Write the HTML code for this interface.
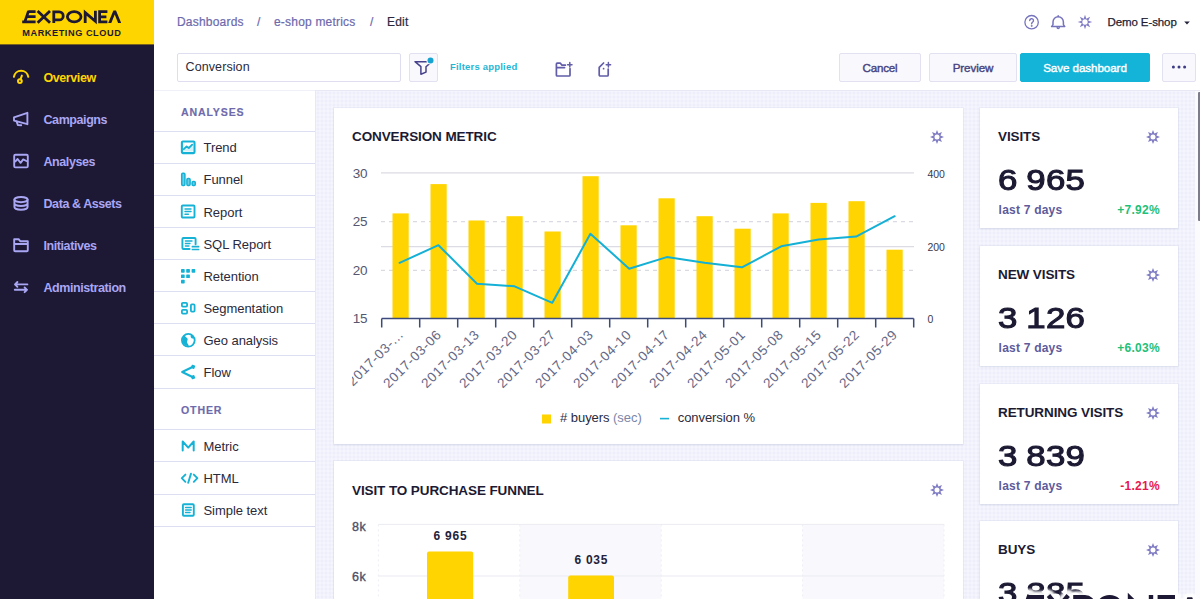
<!DOCTYPE html>
<html>
<head>
<meta charset="utf-8">
<title>Exponea – Edit dashboard</title>
<style>
*{box-sizing:border-box;margin:0;padding:0}
html,body{width:1200px;height:599px;overflow:hidden;background:#fff}
body{font-family:"Liberation Sans",sans-serif;color:#1c1a33;position:relative;-webkit-font-smoothing:antialiased}
.abs{position:absolute}
/* sidebar */
#side{position:absolute;left:0;top:0;width:154px;height:599px;background:#1d1834}
#logo{position:absolute;left:0;top:0;width:154px;height:44px;background:#ffd500;box-shadow:0 0.4px 0 #ffd500}
.nav{position:absolute;left:43.5px;font-size:12.5px;font-weight:700;color:#a9a6f3;letter-spacing:-0.42px;line-height:14px;white-space:nowrap;margin-top:0.5px}
.nav.on{color:#ffd600}
.nico{position:absolute;left:12px;width:18px;height:18px}
/* top */
.bc{position:absolute;top:15px;font-size:12px;line-height:14px;color:#6d69ad;white-space:nowrap;letter-spacing:0.2px;-webkit-text-stroke:0.2px}
/* toolbar */
.btn{position:absolute;top:53px;height:29px;border:1px solid #e1e1f2;background:#f8f8fd;border-radius:2px;font-size:11.6px;font-weight:400;color:#47437f;text-align:center;line-height:27px;letter-spacing:0px;-webkit-text-stroke:0.4px}
/* left panel */
#panel{position:absolute;left:154px;top:90px;width:161px;height:509px;background:#fff;border-top:1px solid #f0f0f9}
.ph{position:absolute;left:27px;font-size:10.6px;font-weight:700;color:#6e6aab;letter-spacing:0.85px;line-height:12px;-webkit-text-stroke:0.15px #6e6aab}
.sep{position:absolute;left:0;width:161px;height:1px;background:#dedef2}
.it{position:absolute;left:49.5px;font-size:13px;color:#2a2a3c;line-height:16px;white-space:nowrap;letter-spacing:-0.05px;margin-top:1px}
.ico{position:absolute;left:26px;width:16px;height:16px}
/* main */
#main{position:absolute;left:315px;top:90px;width:885px;height:509px;background:#f5f6fd;overflow:hidden;border-left:1px solid #e7e8f4;border-top:1px solid #e7e8f4}
.card{position:absolute;background:#fff;box-shadow:0 0 0 1px rgba(205,208,232,.22),0 1px 2px rgba(120,125,170,.16)}
.ct{position:absolute;font-size:13.5px;font-weight:700;color:#1c1a33;white-space:nowrap;line-height:16px;letter-spacing:-0.1px}
.big{position:absolute;left:18px;font-size:29px;font-weight:400;color:#1c1a33;line-height:32px;white-space:nowrap;transform:scaleX(1.2);transform-origin:0 0;-webkit-text-stroke:1.05px #1c1a33;word-spacing:-1px;letter-spacing:0.2px}
.sub{position:absolute;left:18px;font-size:12px;font-weight:700;color:#5d5b9c;line-height:14px;white-space:nowrap;letter-spacing:0.22px}
.pct{position:absolute;right:17px;font-size:12px;font-weight:700;line-height:14px;white-space:nowrap;letter-spacing:0.3px}
.gear{position:absolute;width:16px;height:16px}
</style>
</head>
<body>

<!-- ============ SIDEBAR ============ -->
<div id="side">
  <div id="logo"></div>
  <svg class="abs" style="left:0;top:0" width="154" height="45" viewBox="0 0 154 45" fill="none" stroke="#1d1834" stroke-width="2.8" font-family="Liberation Sans, sans-serif">
    <path d="M22.2 21.9H35.6M26.4 16.7H35.6M28.4 11.6H35.6M24.8 21.9L28.6 10.9"/>
    <path d="M37.6 11L50 22.8M50 11L37.6 22.8"/>
    <path d="M53.8 23V11.9H59.2A4 4 0 0 1 59.2 19.9H54"/>
    <ellipse cx="74.2" cy="16.8" rx="6.8" ry="5.1"/>
    <path d="M85.2 23V12.6L95.4 21.2V10.7"/>
    <path d="M107.4 11.7H99.6V21.9H107.4M99.6 16.8H106.4"/>
    <path d="M108.2 23L113.4 10.5H116L121.2 23H118.1L114.7 14.4L111.3 23Z" fill="#1d1834" stroke="none"/>
    <text x="22.3" y="35.6" font-size="9.2" font-weight="700" fill="#1d1834" stroke="none" textLength="98.5" lengthAdjust="spacing">MARKETING CLOUD</text>
  </svg>
  <svg class="nico" style="top:68px" viewBox="0 0 18 18" fill="none" stroke="#ffd600" stroke-width="2" stroke-linecap="round" stroke-linejoin="round"><path d="M1.9 8.8A7.3 7.3 0 0 1 16.3 8.8"/><circle cx="7.9" cy="13.1" r="1.9"/><path d="M8.6 11.2L9.9 7.6"/></svg>
  <svg class="nico" style="top:110px" viewBox="0 0 18 18" fill="none" stroke="#a9a6f3" stroke-width="1.9" stroke-linecap="round" stroke-linejoin="round"><path d="M2 7.4L15.4 2.8V14.2L2 10.6Z"/><path d="M4.6 11.4L5.8 15L9.2 15.2" /></svg>
  <svg class="nico" style="top:152px" viewBox="0 0 18 18" fill="none" stroke="#a9a6f3" stroke-width="1.9" stroke-linecap="round" stroke-linejoin="round"><rect x="2.2" y="2.8" width="13.6" height="12.6" rx="1.2"/><path d="M3.4 9.4L5.6 7L8.6 10.8L11.2 7.4L14.4 9"/></svg>
  <svg class="nico" style="top:194px" viewBox="0 0 18 18" fill="none" stroke="#a9a6f3" stroke-width="1.9" stroke-linecap="round" stroke-linejoin="round"><ellipse cx="9" cy="5.6" rx="6.6" ry="2.6"/><path d="M2.4 5.6V13C2.4 14.5 5.3 15.7 9 15.7S15.6 14.5 15.6 13V5.6M2.4 9.3C2.4 10.8 5.3 12 9 12S15.6 10.8 15.6 9.3"/></svg>
  <svg class="nico" style="top:236px" viewBox="0 0 18 18" fill="none" stroke="#a9a6f3" stroke-width="1.9" stroke-linecap="round" stroke-linejoin="round"><path d="M2.2 14.2V3.2H6.6L8.2 5.2H15.8V14.2A1 1 0 0 1 14.8 15.2H3.2A1 1 0 0 1 2.2 14.2ZM2.2 8H15.8"/></svg>
  <svg class="nico" style="top:278px" viewBox="0 0 18 18" fill="none" stroke="#a9a6f3" stroke-width="1.9" stroke-linecap="round" stroke-linejoin="round"><path d="M3 6.4H15.4M5.4 4L3 6.4L5.4 8.8M15 11.8H2.8M12.6 9.4L15 11.8L12.6 14.2"/></svg>
  <div class="nav on" style="top:70px">Overview</div>
  <div class="nav" style="top:112px">Campaigns</div>
  <div class="nav" style="top:154px">Analyses</div>
  <div class="nav" style="top:196px">Data &amp; Assets</div>
  <div class="nav" style="top:238px">Initiatives</div>
  <div class="nav" style="top:280px">Administration</div>
</div>

<!-- ============ TOP BAR ============ -->
<div class="bc" style="left:177px">Dashboards</div>
<div class="bc" style="left:257px">/</div>
<div class="bc" style="left:274px">e-shop metrics</div>
<div class="bc" style="left:370px">/</div>
<div class="bc" style="left:387px;color:#2b2a3d">Edit</div>
<div class="bc" style="left:1107.5px;color:#1f1e33;font-size:11.5px;letter-spacing:-0.1px;-webkit-text-stroke:0.25px #1f1e33">Demo E-shop</div>

<!-- ============ TOOLBAR ============ -->
<div class="abs" style="left:177px;top:53px;width:224px;height:29px;border:1px solid #dedef0;border-radius:2px;background:#fff;font-size:12.5px;line-height:27px;padding-left:7.5px;color:#2b2a3d;letter-spacing:0.1px">Conversion</div>
<div class="btn" style="left:409px;width:29px"></div>
<div class="abs" style="left:450px;top:61px;font-size:9.5px;font-weight:700;color:#1fb6d6;line-height:12px;letter-spacing:0.2px;white-space:nowrap">Filters applied</div>
<div class="btn" style="left:839px;width:82px;letter-spacing:-0.2px">Cancel</div>
<div class="btn" style="left:929px;width:88px;letter-spacing:-0.1px">Preview</div>
<div class="btn" style="left:1020px;width:130px;background:#14b4d8;border-color:#14b4d8;color:#fff;letter-spacing:-0.06px">Save dashboard</div>
<div class="btn" style="left:1162px;width:34px"></div>


<!-- header icons -->
<svg class="abs" style="left:1023px;top:14px" width="17" height="17" viewBox="0 0 17 17" fill="none" stroke="#7673bd" stroke-width="1.3" stroke-linecap="round"><circle cx="8.6" cy="8.2" r="6.7"/><path d="M6.7 6.6A1.9 1.9 0 1 1 9.4 8.3C8.8 8.7 8.6 9 8.6 9.8" stroke-width="1.4"/><circle cx="8.6" cy="11.9" r="0.6" fill="#7673bd" stroke-width="0.6"/></svg>
<svg class="abs" style="left:1049px;top:14px" width="18" height="17" viewBox="0 0 18 17" fill="none" stroke="#7673bd" stroke-width="1.5" stroke-linejoin="round" stroke-linecap="round"><path d="M2.6 12.6H15.8L14.4 10.6V8A5.2 5.2 0 0 0 4 8V10.6Z"/><path d="M9.2 2.6V1.7M8.2 13.6A1 1 0 0 0 10.2 13.6" /></svg>
<svg class="abs" style="left:1076px;top:13px" width="18" height="18" viewBox="0 0 18 18"><path fill-rule="evenodd" fill="#807dc4" d="M9.00,1.70L10.34,5.77L14.16,3.84L12.23,7.66L16.30,9.00L12.23,10.34L14.16,14.16L10.34,12.23L9.00,16.30L7.66,12.23L3.84,14.16L5.77,10.34L1.70,9.00L5.77,7.66L3.84,3.84L7.66,5.77Z M11.7 9A2.7 2.7 0 1 0 6.3 9A2.7 2.7 0 1 0 11.7 9Z"/></svg>
<svg class="abs" style="left:1183px;top:20px" width="8" height="6" viewBox="0 0 8 6"><path d="M1.2 1.6H6.8L4 4.6Z" fill="#23223a"/></svg>

<!-- toolbar icons -->
<svg class="abs" style="left:409px;top:53px" width="30" height="29" viewBox="0 0 30 29" fill="none"><path d="M6 8.7H22.8L17 13.7V19.1L11.9 21.3V13.6Z" stroke="#46418c" stroke-width="1.5" stroke-linejoin="round"/><circle cx="21.5" cy="7.4" r="4.1" fill="#f8f8fd"/><circle cx="21.5" cy="7.4" r="3" fill="#17a3d2"/></svg>
<svg class="abs" style="left:554px;top:60px" width="20" height="18" viewBox="0 0 20 18" fill="none" stroke="#615da8" stroke-width="1.7" stroke-linejoin="round" stroke-linecap="round"><path d="M11.4 5.2H8L6.4 3.2H3.2A.8 .8 0 0 0 2.4 4V15.2A.8 .8 0 0 0 3.2 16H15.2A.8 .8 0 0 0 16 15.2V8.6M2.6 7.6H10.6"/><path d="M15.8 2.6V7M13.6 4.8H18" stroke-width="1.5"/></svg>
<svg class="abs" style="left:596px;top:60px" width="18" height="18" viewBox="0 0 18 18" fill="none" stroke="#615da8" stroke-width="1.7" stroke-linejoin="round" stroke-linecap="round"><path d="M7.6 3L3.2 7.4V15A1 1 0 0 0 4.2 16H11.2A1 1 0 0 0 12.2 15V9"/><circle cx="7.6" cy="8.7" r="0.9" fill="#615da8" stroke="none"/><path d="M12.4 2.6V7M10.2 4.8H14.6" stroke-width="1.5"/></svg>
<svg class="abs" style="left:1171px;top:64px" width="16" height="6" viewBox="0 0 16 6" fill="#3d3a86"><circle cx="2.4" cy="3" r="1.5"/><circle cx="8" cy="3" r="1.5"/><circle cx="13.6" cy="3" r="1.5"/></svg>

<!-- ============ LEFT PANEL ============ -->
<div id="panel">
  <div class="ph" style="top:15px">ANALYSES</div>
  <div class="ph" style="top:313px">OTHER</div>
  <div class="sep" style="top:40px"></div>
  <div class="sep" style="top:72px"></div>
  <div class="sep" style="top:104px"></div>
  <div class="sep" style="top:136px"></div>
  <div class="sep" style="top:168px"></div>
  <div class="sep" style="top:200px"></div>
  <div class="sep" style="top:232px"></div>
  <div class="sep" style="top:264px"></div>
  <div class="sep" style="top:297px"></div>
  <svg class="ico" style="top:48px;width:20px" viewBox="0 0 20 16" fill="none" stroke="#16b2d5" stroke-width="2.1" stroke-linecap="round" stroke-linejoin="round"><path d="M3 12.6V10.2L6.6 7.2L8.6 8.8L12.6 5.2L13.4 12.6Z" fill="#16b2d5" fill-opacity=".18" stroke="none"/><rect x="1.9" y="2.5" width="12.6" height="11.6" rx="1"/><path d="M3.8 10.2L6.6 7.4L8.8 9L12.2 5.6" stroke-width="1.8"/></svg>
  <div class="it" style="top:48px">Trend</div>
  <svg class="ico" style="top:80px;width:20px" viewBox="0 0 20 16" fill="none" stroke="#16b2d5" stroke-width="1.5" stroke-linecap="round" stroke-linejoin="round"><rect x="1.7" y="2.2" width="3.2" height="12.2" rx="1.1" fill="#6dcde5"/><rect x="6.9" y="7.6" width="3.2" height="6.8" rx="1.1" fill="#6dcde5"/><rect x="12.1" y="10.6" width="3.2" height="3.8" rx="1.1" fill="#6dcde5"/></svg>
  <div class="it" style="top:80px">Funnel</div>
  <svg class="ico" style="top:113px;width:20px" viewBox="0 0 20 16" fill="none" stroke="#16b2d5" stroke-width="1.9" stroke-linecap="round" stroke-linejoin="round"><rect x="1.8" y="1.5" width="12.7" height="12" rx="1"/><path d="M5 5H11M5 7.6H11M5 10.2H8.4" stroke-width="1.5"/></svg>
  <div class="it" style="top:113px">Report</div>
  <svg class="ico" style="top:145px;width:20px" viewBox="0 0 20 16" fill="none" stroke="#16b2d5" stroke-width="1.9" stroke-linecap="round" stroke-linejoin="round"><path d="M9.6 13H3.4a1 1 0 0 1-1-1V3a1 1 0 0 1 1-1h11.2a1 1 0 0 1 1 1V8.2"/><path d="M5.4 5H12M5.4 7.5H10M5.4 10H9" stroke-width="1.4"/><path d="M12.4 10.7H18.6M12.4 13.5H18.6" stroke-width="1.7"/></svg>
  <div class="it" style="top:145px">SQL Report</div>
  <svg class="ico" style="top:177px;width:20px" viewBox="0 0 20 16" fill="#16b2d5"><rect x="1" y="1" width="3.7" height="3.7" rx="0.7"/><rect x="6.2" y="1" width="3.7" height="3.7" rx="0.7"/><rect x="11.6" y="1" width="3.7" height="3.7" rx="0.7"/><rect x="1" y="6.4" width="3.7" height="3.7" rx="0.7"/><rect x="6.2" y="6.4" width="3.7" height="3.7" rx="0.7"/><rect x="1" y="11.8" width="3.7" height="3.7" rx="0.7"/></svg>
  <div class="it" style="top:177px">Retention</div>
  <svg class="ico" style="top:209px;width:20px" viewBox="0 0 20 16" fill="none" stroke="#16b2d5" stroke-width="1.8" stroke-linecap="round" stroke-linejoin="round"><rect x="1.9" y="2.9" width="5.2" height="3.7" rx="1"/><rect x="1.9" y="9.9" width="5.2" height="3.7" rx="1"/><rect x="10.9" y="4.4" width="3.7" height="7.2" rx="1"/></svg>
  <div class="it" style="top:209px">Segmentation</div>
  <svg class="ico" style="top:241px;width:20px" viewBox="0 0 20 16" fill="none" stroke="#16b2d5" stroke-width="1.8" stroke-linecap="round" stroke-linejoin="round"><circle cx="8.3" cy="8.3" r="6.4"/><path d="M4.6 3.6C5.4 5.2 7 5.6 7.6 6.8C8.2 8.2 6.6 9 7 10.6C7.3 11.9 8.6 12.4 8.8 14.2C5.4 14.4 2.4 11.6 2.6 8C2.6 6.2 3.4 4.6 4.6 3.6ZM11.2 2.8C10.4 4 10.4 5.4 11.6 6.2C12.6 6.8 13.6 6.6 14.4 6.2C13.8 4.6 12.8 3.4 11.2 2.8Z" fill="#16b2d5" stroke="none"/></svg>
  <div class="it" style="top:241px">Geo analysis</div>
  <svg class="ico" style="top:273px;width:20px" viewBox="0 0 20 16" fill="none" stroke="#16b2d5" stroke-width="1.9" stroke-linecap="round" stroke-linejoin="round"><path d="M13 2.8L2.2 8L13 13.2" stroke-width="2.1"/><rect x="11.3" y="1" width="3.6" height="3.6" rx=".6" fill="#16b2d5" stroke="none" transform="rotate(20 13.1 2.8)"/><rect x="11.3" y="11.4" width="3.6" height="3.6" rx=".6" fill="#16b2d5" stroke="none" transform="rotate(-20 13.1 13.2)"/></svg>
  <div class="it" style="top:273px">Flow</div>
  <div class="sep" style="top:338px"></div>
  <div class="sep" style="top:370px"></div>
  <div class="sep" style="top:403px"></div>
  <div class="sep" style="top:435px"></div>
  <svg class="ico" style="top:347px;width:20px" viewBox="0 0 20 16" fill="none" stroke="#16b2d5" stroke-width="1.9" stroke-linecap="round" stroke-linejoin="round"><path d="M2.7 12.6V3.5L8.2 9.6L13.7 3.5V12.6" stroke-width="2"/></svg>
  <div class="it" style="top:347px">Metric</div>
  <svg class="ico" style="top:379px;width:20px" viewBox="0 0 20 16" fill="none" stroke="#16b2d5" stroke-width="1.9" stroke-linecap="round" stroke-linejoin="round"><path d="M5.4 4.6L1.8 8.2L5.4 11.8M13.8 4.6L17.4 8.2L13.8 11.8M11 3.6L8.2 12.8" stroke-width="1.9"/></svg>
  <div class="it" style="top:379px">HTML</div>
  <svg class="ico" style="top:411px;width:20px" viewBox="0 0 20 16" fill="none" stroke="#16b2d5" stroke-width="1.9" stroke-linecap="round" stroke-linejoin="round"><rect x="2.9" y="2.2" width="10.9" height="11.6" rx="1"/><path d="M5.6 5.6H11.2M5.6 8H11.2M5.6 10.4H10" stroke-width="1.5"/></svg>
  <div class="it" style="top:411px">Simple text</div>
</div>

<!-- ============ MAIN ============ -->
<div id="main">
  <svg class="abs" style="left:0;top:0" width="885" height="509"><defs><pattern id="dm" width="4" height="4" patternUnits="userSpaceOnUse"><path d="M2 0L4 2L2 4L0 2Z" fill="#edeef9"/></pattern></defs><rect width="885" height="509" fill="url(#dm)"/></svg>
  <div class="card" id="c1" style="left:18px;top:17px;width:629px;height:336px"></div>
  <div class="card" id="c2" style="left:18px;top:370px;width:629px;height:200px"></div>
  <div class="card" id="r1" style="left:664px;top:17px;width:198px;height:120px"></div>
  <div class="card" id="r2" style="left:664px;top:155px;width:198px;height:120px"></div>
  <div class="card" id="r3" style="left:664px;top:293px;width:198px;height:120px"></div>
  <div class="card" id="r4" style="left:664px;top:430px;width:198px;height:120px"></div>
</div>



<!-- card titles -->
<div class="ct" style="left:352px;top:129px">CONVERSION METRIC</div>
<div class="ct" style="left:352px;top:483px">VISIT TO PURCHASE FUNNEL</div>
<svg class="abs" style="left:928px;top:128px" width="18" height="18" viewBox="0 0 18 18"><path fill-rule="evenodd" fill="#807dc4" d="M9.00,2.00L10.42,5.58L13.95,4.05L12.42,7.58L16.00,9.00L12.42,10.42L13.95,13.95L10.42,12.42L9.00,16.00L7.58,12.42L4.05,13.95L5.58,10.42L2.00,9.00L5.58,7.58L4.05,4.05L7.58,5.58Z M11.5 9A2.5 2.5 0 1 0 6.5 9A2.5 2.5 0 1 0 11.5 9Z"/></svg>
<svg class="abs" style="left:928px;top:481px" width="18" height="18" viewBox="0 0 18 18"><path fill-rule="evenodd" fill="#807dc4" d="M9.00,2.00L10.42,5.58L13.95,4.05L12.42,7.58L16.00,9.00L12.42,10.42L13.95,13.95L10.42,12.42L9.00,16.00L7.58,12.42L4.05,13.95L5.58,10.42L2.00,9.00L5.58,7.58L4.05,4.05L7.58,5.58Z M11.5 9A2.5 2.5 0 1 0 6.5 9A2.5 2.5 0 1 0 11.5 9Z"/></svg>
<div class="ct" style="left:998px;top:129px">VISITS</div>
<svg class="abs" style="left:1144px;top:127.5px" width="18" height="18" viewBox="0 0 18 18"><path fill-rule="evenodd" fill="#807dc4" d="M9.00,2.00L10.42,5.58L13.95,4.05L12.42,7.58L16.00,9.00L12.42,10.42L13.95,13.95L10.42,12.42L9.00,16.00L7.58,12.42L4.05,13.95L5.58,10.42L2.00,9.00L5.58,7.58L4.05,4.05L7.58,5.58Z M11.5 9A2.5 2.5 0 1 0 6.5 9A2.5 2.5 0 1 0 11.5 9Z"/></svg>
<div class="big" style="left:998.4px;top:163.5px">6 965</div>
<div class="sub" style="left:998.6px;top:203px">last 7 days</div>
<div class="pct" style="left:auto;right:40px;top:203px;color:#1fc078">+7.92%</div>
<div class="ct" style="left:998px;top:267px">NEW VISITS</div>
<svg class="abs" style="left:1144px;top:265.5px" width="18" height="18" viewBox="0 0 18 18"><path fill-rule="evenodd" fill="#807dc4" d="M9.00,2.00L10.42,5.58L13.95,4.05L12.42,7.58L16.00,9.00L12.42,10.42L13.95,13.95L10.42,12.42L9.00,16.00L7.58,12.42L4.05,13.95L5.58,10.42L2.00,9.00L5.58,7.58L4.05,4.05L7.58,5.58Z M11.5 9A2.5 2.5 0 1 0 6.5 9A2.5 2.5 0 1 0 11.5 9Z"/></svg>
<div class="big" style="left:998.4px;top:301.5px">3 126</div>
<div class="sub" style="left:998.6px;top:341px">last 7 days</div>
<div class="pct" style="left:auto;right:40px;top:341px;color:#1fc078">+6.03%</div>
<div class="ct" style="left:998px;top:405px">RETURNING VISITS</div>
<svg class="abs" style="left:1144px;top:403.5px" width="18" height="18" viewBox="0 0 18 18"><path fill-rule="evenodd" fill="#807dc4" d="M9.00,2.00L10.42,5.58L13.95,4.05L12.42,7.58L16.00,9.00L12.42,10.42L13.95,13.95L10.42,12.42L9.00,16.00L7.58,12.42L4.05,13.95L5.58,10.42L2.00,9.00L5.58,7.58L4.05,4.05L7.58,5.58Z M11.5 9A2.5 2.5 0 1 0 6.5 9A2.5 2.5 0 1 0 11.5 9Z"/></svg>
<div class="big" style="left:998.4px;top:439.5px">3 839</div>
<div class="sub" style="left:998.6px;top:479px">last 7 days</div>
<div class="pct" style="left:auto;right:40px;top:479px;color:#e8174f">-1.21%</div>
<div class="ct" style="left:998px;top:542px">BUYS</div>
<svg class="abs" style="left:1144px;top:540.5px" width="18" height="18" viewBox="0 0 18 18"><path fill-rule="evenodd" fill="#807dc4" d="M9.00,2.00L10.42,5.58L13.95,4.05L12.42,7.58L16.00,9.00L12.42,10.42L13.95,13.95L10.42,12.42L9.00,16.00L7.58,12.42L4.05,13.95L5.58,10.42L2.00,9.00L5.58,7.58L4.05,4.05L7.58,5.58Z M11.5 9A2.5 2.5 0 1 0 6.5 9A2.5 2.5 0 1 0 11.5 9Z"/></svg>
<div class="big" style="left:998.4px;top:576.5px">3 885</div>
<div class="sub" style="left:998.6px;top:616px">last 7 days</div>
<div class="pct" style="left:auto;right:40px;top:616px;color:#1fc078">+4.43%</div>

<!-- ============ CHART 1 ============ -->
<svg class="abs" id="ch1" style="left:0;top:0" width="1200" height="599" viewBox="0 0 1200 599" font-family="Liberation Sans, sans-serif">
<path d="M381 172.8H914M381 246.6H914" stroke="#dcdce4" stroke-width="1.2" fill="none"/>
<path d="M381 221.6H914M381 270.4H914" stroke="#dadae2" stroke-width="1.1" stroke-dasharray="4 4" fill="none"/>
<rect x="392.5" y="213.4" width="16.2" height="105.0" fill="#ffd400"/>
<rect x="430.5" y="184.1" width="16.2" height="134.3" fill="#ffd400"/>
<rect x="468.5" y="220.5" width="16.2" height="97.9" fill="#ffd400"/>
<rect x="506.5" y="216.2" width="16.2" height="102.2" fill="#ffd400"/>
<rect x="544.5" y="231.5" width="16.2" height="86.9" fill="#ffd400"/>
<rect x="582.5" y="176.2" width="16.2" height="142.2" fill="#ffd400"/>
<rect x="620.5" y="225.3" width="16.2" height="93.1" fill="#ffd400"/>
<rect x="658.5" y="198.3" width="16.2" height="120.1" fill="#ffd400"/>
<rect x="696.5" y="216.2" width="16.2" height="102.2" fill="#ffd400"/>
<rect x="734.5" y="228.7" width="16.2" height="89.7" fill="#ffd400"/>
<rect x="772.5" y="213.4" width="16.2" height="105.0" fill="#ffd400"/>
<rect x="810.5" y="202.9" width="16.2" height="115.5" fill="#ffd400"/>
<rect x="848.5" y="201.2" width="16.2" height="117.2" fill="#ffd400"/>
<rect x="886.5" y="249.7" width="16.2" height="68.7" fill="#ffd400"/>
<polyline points="399.6,262.8 438.5,245.2 477.0,283.8 514.6,286.3 552.3,302.8 590.4,233.8 629.2,268.7 666.8,257.1 704.6,262.7 742.0,267.3 781.2,246.3 818.7,239.5 856.1,236.6 894.7,216.2" fill="none" stroke="#14b0d6" stroke-width="2" stroke-linejoin="round" stroke-linecap="round"/>
<path d="M381.7 318.4H913.7M381.7 318.4V327.4M419.7 318.4V327.4M457.7 318.4V327.4M495.7 318.4V327.4M533.7 318.4V327.4M571.7 318.4V327.4M609.7 318.4V327.4M647.7 318.4V327.4M685.7 318.4V327.4M723.7 318.4V327.4M761.7 318.4V327.4M799.7 318.4V327.4M837.7 318.4V327.4M875.7 318.4V327.4M913.7 318.4V327.4" stroke="#3d4a7c" stroke-width="1.5" fill="none"/>
<text x="367.4" y="177.6" font-size="13.5" fill="#55566f" letter-spacing="-0.2" text-anchor="end">30</text>
<text x="367.4" y="226.4" font-size="13.5" fill="#55566f" letter-spacing="-0.2" text-anchor="end">25</text>
<text x="367.4" y="275.2" font-size="13.5" fill="#55566f" letter-spacing="-0.2" text-anchor="end">20</text>
<text x="367.4" y="323.2" font-size="13.5" fill="#55566f" letter-spacing="-0.2" text-anchor="end">15</text>
<text x="927.5" y="178" font-size="10.5" fill="#3a3a4c" letter-spacing="-0.15">400</text>
<text x="927.5" y="250.6" font-size="10.5" fill="#3a3a4c" letter-spacing="-0.15">200</text>
<text x="927.5" y="323.0" font-size="10.5" fill="#3a3a4c" letter-spacing="-0.15">0</text>
<defs><clipPath id="cl1"><rect x="352" y="320" width="600" height="80"/></clipPath></defs><g clip-path="url(#cl1)">
<text transform="translate(404.2,335.4) rotate(-45)" text-anchor="end" font-size="13.5" fill="#636887" letter-spacing="0.65">2017-03-...</text>
<text transform="translate(442.2,335.4) rotate(-45)" text-anchor="end" font-size="13.5" fill="#636887" letter-spacing="0.65">2017-03-06</text>
<text transform="translate(480.2,335.4) rotate(-45)" text-anchor="end" font-size="13.5" fill="#636887" letter-spacing="0.65">2017-03-13</text>
<text transform="translate(518.2,335.4) rotate(-45)" text-anchor="end" font-size="13.5" fill="#636887" letter-spacing="0.65">2017-03-20</text>
<text transform="translate(556.2,335.4) rotate(-45)" text-anchor="end" font-size="13.5" fill="#636887" letter-spacing="0.65">2017-03-27</text>
<text transform="translate(594.2,335.4) rotate(-45)" text-anchor="end" font-size="13.5" fill="#636887" letter-spacing="0.65">2017-04-03</text>
<text transform="translate(632.2,335.4) rotate(-45)" text-anchor="end" font-size="13.5" fill="#636887" letter-spacing="0.65">2017-04-10</text>
<text transform="translate(670.2,335.4) rotate(-45)" text-anchor="end" font-size="13.5" fill="#636887" letter-spacing="0.65">2017-04-17</text>
<text transform="translate(708.2,335.4) rotate(-45)" text-anchor="end" font-size="13.5" fill="#636887" letter-spacing="0.65">2017-04-24</text>
<text transform="translate(746.2,335.4) rotate(-45)" text-anchor="end" font-size="13.5" fill="#636887" letter-spacing="0.65">2017-05-01</text>
<text transform="translate(784.2,335.4) rotate(-45)" text-anchor="end" font-size="13.5" fill="#636887" letter-spacing="0.65">2017-05-08</text>
<text transform="translate(822.2,335.4) rotate(-45)" text-anchor="end" font-size="13.5" fill="#636887" letter-spacing="0.65">2017-05-15</text>
<text transform="translate(860.2,335.4) rotate(-45)" text-anchor="end" font-size="13.5" fill="#636887" letter-spacing="0.65">2017-05-22</text>
<text transform="translate(898.2,335.4) rotate(-45)" text-anchor="end" font-size="13.5" fill="#636887" letter-spacing="0.65">2017-05-29</text>
</g>
<rect x="542" y="414.5" width="9" height="9" fill="#ffd400"/>
<text x="560" y="422" font-size="13" fill="#2b2b3d" textLength="81.8" lengthAdjust="spacing"># buyers <tspan fill="#7b86a8">(sec)</tspan></text>
<path d="M660 418.6H669" stroke="#16b2d5" stroke-width="1.6"/>
<text x="677.7" y="422" font-size="13" fill="#2b2b3d" textLength="77.3" lengthAdjust="spacing">conversion %</text>
</svg>

<!-- ============ CHART 2 ============ -->
<svg class="abs" id="ch2" style="left:0;top:0" width="1200" height="599" viewBox="0 0 1200 599" font-family="Liberation Sans, sans-serif">
<rect x="519.8" y="524.4" width="141.4" height="80" fill="#f8f8fd"/>
<rect x="802.6" y="524.4" width="141.4" height="80" fill="#f8f8fd"/>
<path d="M378.4 524.4H944M378.4 576H944" stroke="#ebebf3" stroke-width="1" fill="none"/>
<path d="M378.4 524.4V599M519.8 524.4V599M661.2 524.4V599M802.6 524.4V599M944.0 524.4V599" stroke="#ededf5" stroke-width="1" stroke-dasharray="2 3" fill="none"/>
<path d="M427 599V553.5a2 2 0 0 1 2-2h42.2a2 2 0 0 1 2 2V599Z" fill="#ffd400"/>
<path d="M568.2 599V577.4a2 2 0 0 1 2-2h41.8a2 2 0 0 1 2 2V599Z" fill="#ffd400"/>
<text x="433.6" y="539.8" font-size="12" font-weight="700" fill="#23223a" textLength="33" lengthAdjust="spacing">6 965</text>
<text x="574.4" y="563.8" font-size="12" font-weight="700" fill="#23223a" textLength="33" lengthAdjust="spacing">6 035</text>
<text x="718" y="607.6" font-size="12" font-weight="700" fill="#6d6d80" textLength="33" lengthAdjust="spacing">4 005</text>
<text x="352" y="530.8" font-size="12.5" fill="#4d4e68" stroke="#4d4e68" stroke-width="0.35" letter-spacing="0.6">8k</text>
<text x="352" y="581.2" font-size="12.5" fill="#4d4e68" stroke="#4d4e68" stroke-width="0.35" letter-spacing="0.6">6k</text>
</svg>

<div class="abs" style="left:1195px;top:91px;width:5px;height:508px;background:#fbfbfe"></div>
<div class="abs" style="left:1197.5px;top:92px;width:2.5px;height:128.5px;background:#7c7c8c;border-radius:1px 0 0 1px"></div>
<svg class="abs" id="wm" style="left:0;top:2.1px" width="1200" height="599" viewBox="0 0 1200 599" fill="none">
<defs><filter id="bl" x="-5%" y="-50%" width="110%" height="200%"><feGaussianBlur stdDeviation="1.2"/></filter></defs>
<g stroke="#fff" stroke-width="12" stroke-linecap="round" stroke-linejoin="round" opacity="0.95" filter="url(#bl)"><path d="M1019 618H1044M1024 606H1044M1027.5 595.3H1044M1021 618L1029.5 593"/>
<path d="M1048.5 593.5L1069 618M1068.2 593.5L1047.5 618"/>
<path d="M1075.4 620V595.3H1085A8 8 0 0 1 1085 611.5H1080"/>
<ellipse cx="1109.6" cy="606" rx="11.6" ry="10.8"/>
<path d="M1130 620V596L1151 616V593"/>
<path d="M1175 595.3H1159.8V618H1175M1159.8 606H1173"/>
<path d="M1177 622L1187.4 595.3H1192.2L1202.6 622H1198L1189.8 601L1181.6 622Z" fill="#fff" stroke-width="8"/></g>
<g stroke="#1d1834" stroke-width="4.4"><path d="M1019 618H1044M1024 606H1044M1027.5 595.3H1044M1021 618L1029.5 593"/>
<path d="M1048.5 593.5L1069 618M1068.2 593.5L1047.5 618"/>
<path d="M1075.4 620V595.3H1085A8 8 0 0 1 1085 611.5H1080"/>
<ellipse cx="1109.6" cy="606" rx="11.6" ry="10.8"/>
<path d="M1130 620V596L1151 616V593"/>
<path d="M1175 595.3H1159.8V618H1175M1159.8 606H1173"/>
<path d="M1177 622L1187.4 595.3H1192.2L1202.6 622H1198L1189.8 601L1181.6 622Z" fill="#1d1834" stroke-width="0"/></g>
</svg>

</body>
</html>
